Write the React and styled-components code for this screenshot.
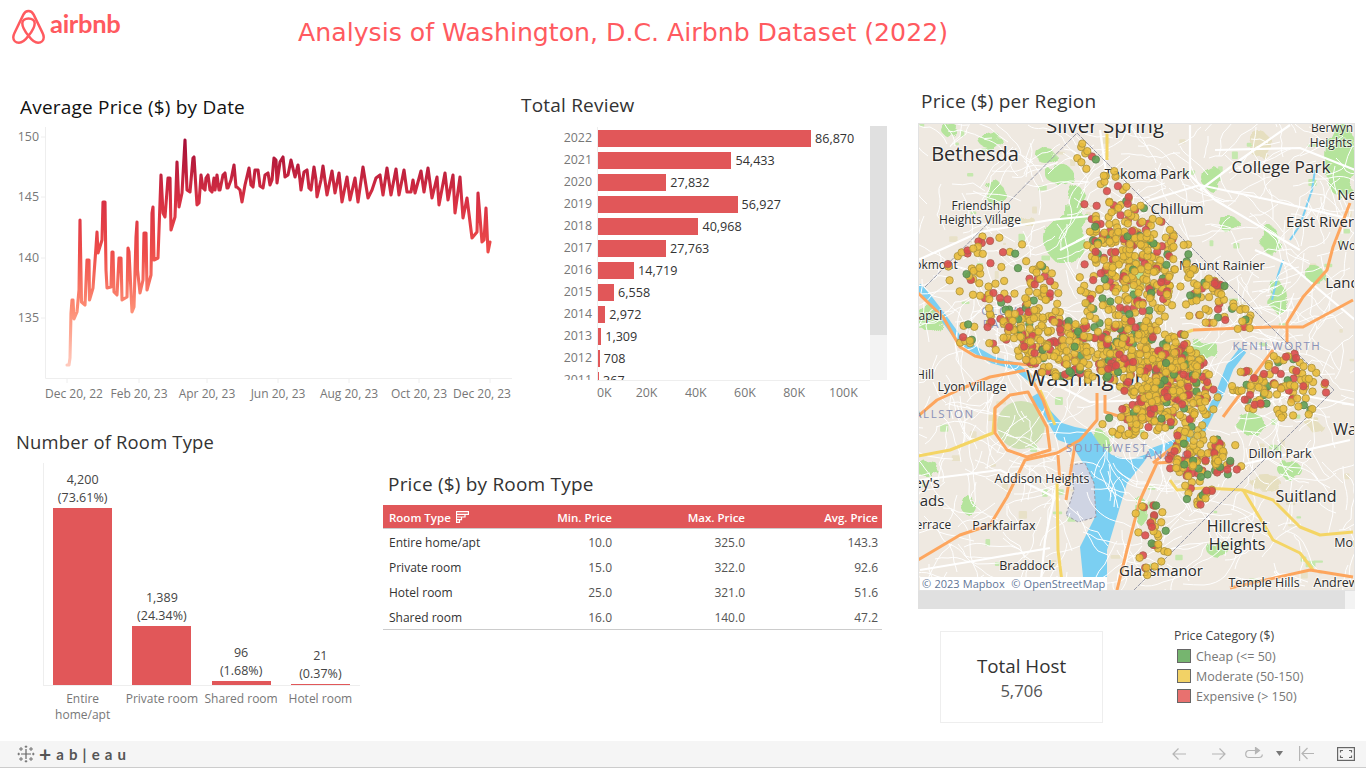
import React from 'react';
import styled, { createGlobalStyle } from 'styled-components';

const GlobalStyle = createGlobalStyle`
  html, body {
    margin: 0;
    padding: 0;
    background: #fff;
  }
  body {
    font-family: 'Open Sans', 'Noto Sans', sans-serif;
    overflow: hidden;
  }
`;

const Page = styled.div`
  width: 1366px;
  height: 768px;
  display: flex;
  flex-direction: column;
  overflow: hidden;
`;

const Header = styled.header`
  height: 88px;
  display: flex;
  flex-shrink: 0;
`;

const Logo = styled.div`
  display: flex;
  align-items: flex-start;
  gap: 5px;
  width: 298px;
  padding: 9px 0 0 12px;
  box-sizing: border-box;
`;

const LogoText = styled.span`
  font-family: Lato, sans-serif;
  font-weight: 700;
  font-size: 25.5px;
  line-height: 30px;
  letter-spacing: -0.3px;
  color: #ff5a5f;
  margin-top: -1px;
`;

const MainTitle = styled.h1`
  margin: 16px 0 0;
  font-family: 'DejaVu Sans', sans-serif;
  font-weight: 400;
  font-size: 25.2px;
  line-height: 34px;
  color: #ff5a5f;
  white-space: nowrap;
`;

const Body = styled.main`
  flex: 1;
  display: grid;
  grid-template-columns: 905px 461px;
  min-height: 0;
`;

const LeftColumn = styled.div`
  display: flex;
  flex-direction: column;
`;

const TopRow = styled.div`
  height: 342px;
  display: flex;
`;

const BottomRow = styled.div`
  flex: 1;
  display: flex;
`;

const PanelTitle = styled.h2`
  margin: 0;
  font-weight: 400;
  font-size: ${(p) => p.$size || 19}px;
  line-height: 24px;
  color: ${(p) => p.$color || '#333'};
  white-space: nowrap;
  letter-spacing: 0.2px;
`;

const LinePanel = styled.section`
  width: 510px;
  padding: 7px 0 0 20px;
  box-sizing: border-box;
`;

const LineSvg = styled.svg`
  display: block;
  margin: 6px 0 0 -20px;
  overflow: visible;
`;

const ReviewPanel = styled.section`
  width: 395px;
  padding: 5px 0 0 11px;
  box-sizing: border-box;
`;

const ReviewBody = styled.div`
  display: flex;
  margin-top: 9px;
`;

const ScrollArea = styled.div`
  width: 349px;
  height: 254px;
  overflow: hidden;
  padding-top: 1px;
  box-sizing: border-box;
`;

const YearRow = styled.div`
  display: flex;
  height: 22px;
  align-items: stretch;
`;

const YearLabel = styled.span`
  width: 71px;
  margin-right: 5px;
  text-align: right;
  font-size: 12.4px;
  line-height: 22px;
  color: #777;
`;

const BarCell = styled.div`
  flex: 1;
  display: flex;
  align-items: center;
  gap: 4px;
  border-left: 1px solid #eee;
`;

const HBar = styled.div`
  height: 17px;
  background: #e15759;
`;

const BarValue = styled.span`
  font-size: 12.6px;
  color: #333;
`;

const VScroll = styled.div`
  width: 17px;
  height: 254px;
  background: #f3f3f3;
`;

const VThumb = styled.div`
  height: 209px;
  background: #e0e0e0;
`;

const ReviewAxis = styled.div`
  display: grid;
  grid-template-columns: 25px repeat(5, 49.2px);
  width: 273px;
  margin-left: 76px;
  border-top: 1px solid #eee;
  padding-top: 4px;
  font-size: 12.4px;
  line-height: 16px;
  color: #777;
`;

const AxisTick = styled.span`
  text-align: center;
  white-space: nowrap;
  &:first-child {
    text-align: left;
  }
`;

const RoomPanel = styled.section`
  width: 383px;
  padding-left: 16px;
  box-sizing: border-box;
`;

const ColumnChart = styled.div`
  display: flex;
  align-items: flex-end;
  width: 317px;
  height: 222px;
  margin: 9px 0 0 27px;
  box-shadow: inset 1px 0 0 #eee;
  border-bottom: 1px solid #eee;
`;

const Column = styled.div`
  flex: 1;
  display: flex;
  flex-direction: column;
  align-items: center;
`;

const ColumnValue = styled.div`
  font-size: 12.5px;
  line-height: 18px;
  color: #444;
  text-align: center;
  margin-bottom: 1px;
`;

const VBar = styled.div`
  width: 59px;
  background: #e15759;
`;

const ColumnLabels = styled.div`
  display: flex;
  width: 317px;
  margin-left: 27px;
  padding-top: 5px;
`;

const ColumnLabel = styled.div`
  flex: 1;
  font-size: 12px;
  line-height: 16px;
  color: #777;
  text-align: center;
  white-space: pre-line;
`;

const TablePanel = styled.section`
  width: 499px;
  padding-top: 42px;
`;

const TableTitle = styled(PanelTitle)`
  padding-left: 5px;
  margin-bottom: 9px;
`;

const TableRow = styled.div`
  display: grid;
  grid-template-columns: 120px 103px 133px 133px;
  align-items: center;
  padding: 1px 4px 0 6px;
  height: 24px;
  font-size: 12px;
  color: #555;
  text-align: right;
`;

const HeadRow = styled(TableRow)`
  background: #e15759;
  color: #fff;
  font-weight: 600;
  font-size: 11.5px;
  height: 22px;
  border-bottom: 1px solid #ccc;
`;

const NameCell = styled.span`
  display: flex;
  align-items: center;
  gap: 5px;
  text-align: left;
  color: ${(p) => (p.$head ? '#fff' : '#333')};
`;

const TableEnd = styled.div`
  border-top: 1px solid #ccc;
`;

const RightColumn = styled.div`
  padding: 1px 0 0 13px;
  display: flex;
  flex-direction: column;
`;

const RegionTitle = styled(PanelTitle)`
  padding-left: 3px;
  margin-bottom: 10px;
`;

const MapFrame = styled.div`
  position: relative;
  width: 437px;
  height: 468px;
  overflow: hidden;
  outline: 1px solid #e2e2e2;
  outline-offset: -1px;
`;

const MapSvg = styled.svg`
  display: block;
`;

const Attribution = styled.div`
  position: absolute;
  left: 2px;
  bottom: 1px;
  padding: 0 2px;
  background: #fff;
  font-size: 11px;
  line-height: 13px;
  color: #5f7596;
  word-spacing: 0.4px;
  white-space: pre;
`;

const HScroll = styled.div`
  width: 437px;
  height: 18px;
  background: #f3f3f3;
`;

const HThumb = styled.div`
  width: 427px;
  height: 18px;
  background: #e0e0e0;
`;

const InfoRow = styled.div`
  display: flex;
  align-items: flex-start;
  padding-top: 18px;
`;

const HostCard = styled.div`
  width: 163px;
  height: 92px;
  margin: 4px 0 0 22px;
  box-sizing: border-box;
  border: 1px solid #eee;
  display: flex;
  flex-direction: column;
  align-items: center;
  padding-top: 21px;
`;

const HostLabel = styled.div`
  font-size: 18.8px;
  line-height: 26px;
  color: #333;
`;

const HostValue = styled.div`
  font-size: 16.6px;
  line-height: 24px;
  color: #555;
`;

const Legend = styled.div`
  margin: 1px 0 0 71px;
`;

const LegendTitle = styled.div`
  font-size: 12.3px;
  line-height: 16px;
  color: #444;
  margin-bottom: 2px;
`;

const LegendItem = styled.div`
  display: flex;
  align-items: center;
  gap: 5px;
  height: 20px;
  padding-left: 3px;
  font-size: 12.5px;
  color: #777;
`;

const Swatch = styled.span`
  width: 14px;
  height: 14px;
  box-sizing: border-box;
  border: 1px solid #666;
  background: ${(p) => p.$color};
`;

const Footer = styled.footer`
  height: 27px;
  flex-shrink: 0;
  box-sizing: border-box;
  display: flex;
  align-items: center;
  background: #f5f5f5;
  border-bottom: 1px solid #ccc;
  padding: 0 11px 1px 17px;
`;

const TableauMark = styled.div`
  display: flex;
  align-items: center;
  gap: 4px;
  flex: 1;
`;

const TableauPlus = styled.span`
  font-family: Lato, sans-serif;
  font-weight: 700;
  font-size: 21px;
  line-height: 20px;
  color: #555;
`;

const TableauText = styled.span`
  font-family: Lato, sans-serif;
  font-weight: 700;
  font-size: 15px;
  letter-spacing: 1.25px;
  word-spacing: -1px;
  margin-left: 1px;
  color: #555;
  white-space: pre;
`;

const ToolIcon = styled.svg`
  display: block;
  margin-left: ${(p) => p.$ml || 0}px;
  fill: none;
  stroke: ${(p) => p.$stroke || '#b5b5b5'};
  stroke-width: 1.2;
`;

// -------- data --------

const linePoints = [
  [67,365],[69,365],[70,358],[71,313],[72,300],[73,300],[74,319],[77,312],[79,290],[80,220],[81.5,302],[85,305],[87,260],[89,260],[89.5,300],[93,288],[96,247],[97,232],[98,253],[102,240],[103,202],[105,202],[106,270],[107,288],[111,287],[112,252],[113,252],[114,292],[117,295],[119,258],[121,258],[122,300],[127,297],[128,248],[129,252],[132,312],[134,307],[136,237],[137,222],[137.5,270],[140,293],[143,280],[144,233],[146,233],[147,290],[151,275],[152,213],[153,207],[154,260],[158,258],[161,175],[163,213],[165,217],[168,178],[170,178],[171,230],[175,217],[177,162],[179,207],[182,193],[185,140],[187,190],[190,192],[193,158],[194,157],[197,205],[199,203],[201,175],[203,188],[205,190],[206,178],[208,175],[210,190],[212,192],[214,178],[215,190],[217,175],[219,190],[220,190],[223,175],[225,173],[227,188],[228,188],[231,180],[234,165],[236,187],[237,187],[240,190],[242,202],[245,185],[249,168],[251,185],[253,187],[255,170],[258,170],[260,186],[263,188],[265,175],[268,173],[270,185],[272,180],[274,158],[276,160],[277,183],[280,162],[283,157],[285,177],[288,175],[291,160],[295,177],[298,165],[300,180],[301,190],[304,172],[307,170],[309,188],[311,190],[314,167],[316,180],[317,197],[321,180],[323,166],[327,195],[332,171],[335,193],[339,173],[342,202],[347,177],[350,200],[355,178],[358,202],[363,167],[368,198],[372,190],[376,178],[380,175],[383,195],[387,168],[391,195],[396,169],[399,195],[404,170],[407,192],[411,192],[413,180],[415,193],[421,171],[424,192],[428,168],[432,198],[437,177],[439,205],[445,173],[448,200],[453,175],[455,213],[460,177],[463,218],[467,198],[472,238],[477,232],[478,193],[482,242],[484,240],[486,208],[488,252],[490,242],
].map((p) => p.join(',')).join(' ');

const yTicks = [['150', 137], ['145', 197], ['140', 258], ['135', 318]];
const xTicks = [
  ['Dec 20, 22', 74, 67], ['Feb 20, 23', 139, 139], ['Apr 20, 23', 207, 207], ['Jun 20, 23', 278, 278],
  ['Aug 20, 23', 349, 349], ['Oct 20, 23', 419, 419], ['Dec 20, 23', 482, 490],
];

const reviews = [
  ['2022', 86870], ['2021', 54433], ['2020', 27832], ['2019', 56927], ['2018', 40968], ['2017', 27763],
  ['2016', 14719], ['2015', 6558], ['2014', 2972], ['2013', 1309], ['2012', 708], ['2011', 367],
];

const roomTypes = [
  { count: '4,200', pct: '(73.61%)', h: 177, label: 'Entire\nhome/apt' },
  { count: '1,389', pct: '(24.34%)', h: 59, label: 'Private room' },
  { count: '96', pct: '(1.68%)', h: 4, label: 'Shared room' },
  { count: '21', pct: '(0.37%)', h: 1, label: 'Hotel room' },
];

const priceRows = [
  ['Entire home/apt', '10.0', '325.0', '143.3'],
  ['Private room', '15.0', '322.0', '92.6'],
  ['Hotel room', '25.0', '321.0', '51.6'],
  ['Shared room', '16.0', '140.0', '47.2'],
];

// seeded random so that the map is the same on each load
const makeRandom = (seed) => {
  let s = seed;
  return () => {
    s = (s * 16807) % 2147483647;
    return s / 2147483647;
  };
};

const clusters = [
  [1085, 350, 68, 30, 210], [1150, 362, 50, 38, 210], [1180, 392, 38, 44, 190], [1150, 415, 24, 22, 55],
  [1125, 288, 46, 60, 210], [1110, 205, 26, 36, 40], [1135, 240, 50, 40, 100], [1190, 270, 44, 40, 70],
  [1232, 305, 48, 26, 58], [985, 262, 42, 40, 50], [1012, 325, 28, 32, 70], [1042, 300, 22, 36, 50],
  [1085, 155, 14, 14, 10], [1122, 420, 22, 20, 24], [1292, 385, 38, 34, 85], [1250, 390, 22, 22, 26],
  [1195, 455, 30, 24, 85], [1226, 455, 20, 20, 22], [1197, 497, 18, 16, 20], [1150, 525, 18, 22, 22],
  [1155, 560, 16, 18, 14], [970, 335, 14, 12, 9],
];

const makeDots = () => {
  const rand = makeRandom(91733);
  const dots = [];
  clusters.forEach(([cx, cy, rx, ry, n]) => {
    for (let i = 0; i < n; i++) {
      const a = rand() * Math.PI * 2;
      const r = Math.pow(rand(), 0.6);
      const x = cx + Math.cos(a) * r * rx;
      const y = cy + Math.sin(a) * r * ry;
      if (x + y < 1210 || y - x < -944 || x + y > 1724) continue;
      const t = rand();
      dots.push({ x, y, kind: t < 0.67 ? 'y' : t < 0.9 ? 'r' : 'g', order: rand() });
    }
  });
  return dots.sort((a, b) => a.order - b.order);
};

const makeStreets = () => {
  const rand = makeRandom(4421);
  const streets = [];
  for (let i = 0; i < 540; i++) {
    let x = 918 + rand() * 437;
    let y = 123 + rand() * 468;
    let angle = rand() * Math.PI * 2;
    let d = `M${x.toFixed(0)} ${y.toFixed(0)}`;
    const steps = 2 + Math.floor(rand() * 3);
    for (let j = 0; j < steps; j++) {
      const len = 8 + rand() * 16;
      const midAngle = angle + (rand() - 0.5) * 0.9;
      const cx = x + Math.cos(midAngle) * len * 0.5;
      const cy = y + Math.sin(midAngle) * len * 0.5;
      x += Math.cos(angle) * len;
      y += Math.sin(angle) * len;
      angle += (rand() - 0.5) * 1.3;
      d += `Q${cx.toFixed(0)} ${cy.toFixed(0)} ${x.toFixed(0)} ${y.toFixed(0)}`;
    }
    streets.push(d);
  }
  return streets;
};

const makeBlocks = () => {
  const rand = makeRandom(1207);
  const blocks = [];
  for (let i = 0; i < 110; i++) {
    blocks.push({
      x: 918 + rand() * 437,
      y: 123 + rand() * 468,
      w: 3 + rand() * 7,
      h: 2 + rand() * 6,
      fill: rand() < 0.55 ? '#c5e8ae' : '#e8e1c8',
    });
  }
  return blocks;
};

const dots = makeDots();
const streets = makeStreets();
const blocks = makeBlocks();

const dotColors = {
  y: ['#e9bd3c', '#a8913c'],
  r: ['#dc4d4d', '#a95f50'],
  g: ['#5f9e53', '#5b8450'],
};

const parks = [
  [1075, 210, 10, 26], [1045, 155, 9, 8], [995, 193, 9, 12], [990, 140, 10, 10], [1065, 240, 20, 24],
  [1341, 160, 16, 38], [1278, 297, 9, 15], [1135, 277, 9, 20], [1250, 423, 14, 11], [1098, 452, 14, 22],
  [927, 468, 11, 9], [1218, 548, 12, 9], [1212, 178, 10, 12], [1060, 175, 14, 10], [1230, 225, 10, 8],
  [1205, 350, 14, 10], [968, 505, 7, 9], [1290, 470, 12, 8], [1270, 240, 8, 14], [930, 318, 11, 14],
  [1140, 510, 6, 14], [1098, 560, 6, 14], [1315, 275, 10, 8], [950, 130, 9, 6],
];

const tanAreas = [
  [1260, 145, 11, 13], [1265, 482, 15, 8], [1315, 425, 8, 6], [1026, 220, 8, 5],
];

const orangeRoads = [
  'M995 408 L1010 395 L1028 392 L1047 427 L1050 450 L1027 457 L1007 450 L995 433 Z',
  'M918 560 L960 535 L990 525 L1007 497 L1025 460 L1057 453 L1080 440 L1097 420 L1097 393',
  'M917 417 L937 400 L963 388 L990 377 L1027 370 L1043 400 L1050 420',
  'M1350 203 L1333 247 L1327 270 L1303 297 L1287 323 L1287 343',
  'M1193 330 L1243 328 L1273 327 L1303 327 L1353 300',
  'M918 293 L943 317 L960 347 L975 356 L1000 362 L1030 365',
  'M1117 590 L1127 550 L1140 500 L1157 463 L1173 462',
  'M1230 588 L1310 570 L1353 577',
  'M1177 433 L1178 443 L1153 463',
  'M1223 417 L1273 350',
  'M1058 455 L1060 483',
  'M1075 445 L1066 500',
  'M1105 395 L1105 412 L1125 418 L1140 410',
];

const yellowRoads = [
  'M918 456 L950 450 L993 433 L995 408',
  'M1057 483 L1058 550 L1063 590',
  'M1170 480 L1177 490 L1203 488 L1243 490 L1273 500 L1300 527 L1320 535 L1353 532',
  'M1243 490 L1263 523 L1273 540 L1300 553 L1313 570',
  'M1107 133 L1107 160',
  'M1167 340 L1193 330',
  'M1040 390 L1055 425',
];

const whiteRoads = [
  'M1060 250 L1110 225 L1150 200 L1200 185 L1270 200 L1355 220',
  'M918 260 L980 232 L1050 220 L1100 215',
  'M1100 130 L1110 200 L1118 280',
  'M1190 125 L1190 175 L1215 200 L1300 250',
  'M1290 125 L1240 160 L1200 190',
  'M1215 150 L1300 148 L1355 170',
  'M1355 320 L1290 265 L1255 250',
  'M1028 370 L1090 402 L1150 400',
  'M1230 395 L1300 395 L1355 405',
  'M920 480 L1000 470 L1060 500',
  'M1060 470 L1045 540 L1040 590',
  'M1240 465 L1350 440',
  'M920 570 L980 560 L1050 548',
];

const mapLabels = [
  ['Silver Spring', 1105, 133, 20.5],
  ['Bethesda', 975, 161, 20],
  ['College Park', 1281, 173, 17.2],
  ['Berwyn', 1332, 132, 12],
  ['Heights', 1331, 147, 12],
  ['Takoma Park', 1147, 179, 14],
  ['Chillum', 1177, 214, 15],
  ['Friendship', 981, 210, 12],
  ['Heights Village', 980, 224, 12],
  ['East River', 1320, 227, 15],
  ['New', 1353, 200, 15],
  ['Wo', 1347, 250, 12],
  ['Mount Rainier', 1222, 270, 13],
  ['Lando', 1347, 288, 15],
  ['Brookmont', 926, 269, 12],
  ['Chapel', 923, 320, 12],
  ['Hill', 925, 379, 12],
  ['Lyon Village', 972, 391, 12.5],
  ['Washington', 1087, 386, 22],
  ['Addison Heights', 1042, 483, 12.5],
  ['Bailey\'s', 914, 488, 15],
  ['Crossroads', 905, 506, 15],
  ['Terrace', 930, 529, 12],
  ['Parkfairfax', 1004, 530, 12.5],
  ['Braddock', 1027, 570, 12.5],
  ['Glassmanor', 1161, 576, 15],
  ['Temple Hills', 1264, 587, 12.5],
  ['Andrews', 1339, 587, 12.5],
  ['Hillcrest', 1237, 532, 16],
  ['Heights', 1237, 550, 16],
  ['Suitland', 1306, 502, 16],
  ['Wa', 1345, 435, 16],
  ['Dillon Park', 1280, 458, 12.5],
  ['Morn', 1350, 547, 12.5],
];

const districtLabels = [
  ['GLOVER', 1008, 315],
  ['PARK', 1000, 328],
  ['KENILWORTH', 1277, 350],
  ['BALLSTON', 940, 418],
  ['SOUTHWEST', 1107, 452],
  ['ANACOSTIA', 1183, 459],
];

// -------- drawings --------

const AirbnbMark = () => (
  <svg width="33" height="35" viewBox="0 0 32 34" fill="none" stroke="#ff5a5f" strokeWidth="2.4">
    <path d="M16 2C13.5 2 12 3.5 11 5.5L2.5 23C1.5 25 1.2 26.2 1.2 27.5C1.2 30.5 3.5 32.8 6.7 32.8C9.5 32.8 12.5 30.8 16 26C19.5 30.8 22.5 32.8 25.3 32.8C28.5 32.8 30.8 30.5 30.8 27.5C30.8 26.2 30.5 25 29.5 23L21 5.5C20 3.5 18.5 2 16 2Z" />
    <path d="M16 26C12 21 10 17 10 14C10 11 12.5 9.2 16 9.2C19.5 9.2 22 11 22 14C22 17 20 21 16 26Z" />
  </svg>
);

const TableauIcon = () => (
  <svg width="18" height="18" viewBox="0 0 18 18" stroke="#666" fill="none">
    <path d="M9 4V14M4 9H14" strokeWidth="1.2" />
    <path d="M9 0.5V3M7.7 1.7H10.3M9 15V17.5M7.7 16.3H10.3M0.5 9H3M1.7 7.7V10.3M15 9H17.5M16.3 7.7V10.3" strokeWidth="0.9" />
    <path d="M4 2V6M2 4H6M14 2V6M12 4H16M4 12V16M2 14H6M14 12V16M12 14H16" strokeWidth="0.9" />
  </svg>
);

const SortIcon = () => (
  <svg width="13" height="13" viewBox="0 0 13 13" stroke="#fff" strokeWidth="1.2" fill="none">
    <path d="M0.5 0.7H12.5V3.3H0.5ZM0.5 3.3V6H9V3.3M0.5 6V8.7H5.5V6M0.5 8.7V11.4H3.5V8.7" />
  </svg>
);

const LineChart = () => (
  <LineSvg width="515" height="285" viewBox="0 125 515 285">
    <defs>
      <linearGradient id="priceLine" gradientUnits="userSpaceOnUse" x1="0" y1="365" x2="0" y2="140">
        <stop offset="0" stopColor="#ffc9bc" />
        <stop offset="0.25" stopColor="#fd8d74" />
        <stop offset="0.5" stopColor="#ee4d4a" />
        <stop offset="0.72" stopColor="#d93244" />
        <stop offset="1" stopColor="#a60f37" />
      </linearGradient>
    </defs>
    <path d="M45.5 127V378.5H512" stroke="#eee" fill="none" />
    {yTicks.map(([label, y]) => (
      <g key={label}>
        <path d={`M41 ${y}H45`} stroke="#eee" />
        <text x="39" y={y + 4} textAnchor="end" fontSize="12.4" fill="#777">{label}</text>
      </g>
    ))}
    {xTicks.map(([label, x, tick]) => (
      <g key={label}>
        <path d={`M${tick} 378V383`} stroke="#eee" />
        <text x={x} y="398" textAnchor="middle" fontSize="12" fill="#777">{label}</text>
      </g>
    ))}
    <polyline points={linePoints} fill="none" stroke="url(#priceLine)" strokeWidth="3.1" strokeLinejoin="round" strokeLinecap="round" />
  </LineSvg>
);

const RegionMap = () => (
  <MapSvg width="437" height="468" viewBox="918 123 437 468">
    <defs>
      <filter id="organicEdge" x="-5%" y="-5%" width="110%" height="110%">
        <feTurbulence type="fractalNoise" baseFrequency="0.08" numOctaves="2" seed="7" />
        <feDisplacementMap in="SourceGraphic" scale="14" />
      </filter>
    </defs>
    <rect x="918" y="123" width="437" height="468" fill="#efe9e1" />
    {blocks.map((b, i) => (
      <rect key={i} x={b.x} y={b.y} width={b.w} height={b.h} rx="1" fill={b.fill} />
    ))}
    <g filter="url(#organicEdge)">
      {parks.map(([cx, cy, rx, ry], i) => (
        <ellipse key={i} cx={cx} cy={cy} rx={rx} ry={ry} fill="#b5e49c" />
      ))}
      {tanAreas.map(([cx, cy, rx, ry], i) => (
        <ellipse key={i} cx={cx} cy={cy} rx={rx} ry={ry} fill="#e6dfc0" />
      ))}
    </g>
    <ellipse cx="1021" cy="425" rx="24" ry="24" fill="#cfe0b4" />
    <path d="M1040 392L1050 410L1062 423L1075 427L1090 430L1100 445L1112 455L1130 460L1150 453L1143 463L1127 483L1113 530L1107 550L1107 590L1086 590L1083 577L1080 547L1095 517L1093 483L1083 463L1072 445L1058 440L1042 412L1030 398Z" fill="#7bcff2" />
    <polyline points="918,286 930,300 943,317 958,338 972,348 993,360 1015,366 1035,382" fill="none" stroke="#7bcff2" strokeWidth="7" />
    <polyline points="1150,453 1177,443 1200,433 1220,393 1230,367 1243,350" fill="none" stroke="#7bcff2" strokeWidth="8" />
    <polyline points="1315,170 1312,190 1300,225 1290,240" fill="none" stroke="#7bcff2" strokeWidth="2" />
    <polyline points="1272,300 1278,275 1283,260" fill="none" stroke="#7bcff2" strokeWidth="2" />
    <path d="M1070 465L1085 463L1094 483L1096 517L1078 522L1066 515L1074 490Z" fill="#cfd4e3" stroke="#9a9aa5" strokeDasharray="3 2" />
    {streets.map((d, i) => (
      <path key={i} d={d} fill="none" stroke="#fff" strokeWidth="1" />
    ))}
    {whiteRoads.map((d, i) => (
      <path key={i} d={d} fill="none" stroke="#fff" strokeWidth="2.2" strokeLinejoin="round" />
    ))}
    {yellowRoads.map((d, i) => (
      <path key={i} d={d} fill="none" stroke="#f4d565" strokeWidth="3" strokeLinejoin="round" />
    ))}
    {orangeRoads.map((d, i) => (
      <path key={i} d={d} fill="none" stroke="#fda65e" strokeWidth="3" strokeLinejoin="round" />
    ))}
    <path d="M925 287L1077 133L1334 390L1133 591" fill="none" stroke="#9a9cab" strokeWidth="1" strokeDasharray="5 1" />
    {mapLabels.map(([text, x, y, size], i) => (
      <text key={i} x={x} y={y} fontSize={size} textAnchor="middle" fill="#2b2b2b" stroke="#fff" strokeOpacity="0.6" strokeWidth="2" paintOrder="stroke">{text}</text>
    ))}
    {districtLabels.map(([text, x, y]) => (
      <text key={text} x={x} y={y} fontSize="11.5" letterSpacing="1.6" textAnchor="middle" fill="#8a92b8">{text}</text>
    ))}
    {dots.map((dot, i) => (
      <circle key={i} cx={dot.x} cy={dot.y} r="3.7" fill={dotColors[dot.kind][0]} fillOpacity="0.9" stroke={dotColors[dot.kind][1]} strokeWidth="0.8" />
    ))}
  </MapSvg>
);

export default function App() {
  return (
    <Page>
      <GlobalStyle />
      <Header>
        <Logo>
          <AirbnbMark />
          <LogoText>airbnb</LogoText>
        </Logo>
        <MainTitle>Analysis of Washington, D.C. Airbnb Dataset (2022)</MainTitle>
      </Header>

      <Body>
        <LeftColumn>
          <TopRow>
            <LinePanel>
              <PanelTitle $color="#111">Average Price ($) by Date</PanelTitle>
              <LineChart />
            </LinePanel>
            <ReviewPanel>
              <PanelTitle>Total Review</PanelTitle>
              <ReviewBody>
                <ScrollArea>
                  {reviews.map(([year, value]) => (
                    <YearRow key={year}>
                      <YearLabel>{year}</YearLabel>
                      <BarCell>
                        <HBar style={{ width: Math.max(1, value * 0.002452) }} />
                        <BarValue>{value.toLocaleString('en-US')}</BarValue>
                      </BarCell>
                    </YearRow>
                  ))}
                </ScrollArea>
                <VScroll>
                  <VThumb />
                </VScroll>
              </ReviewBody>
              <ReviewAxis>
                {['0K', '20K', '40K', '60K', '80K', '100K'].map((t) => (
                  <AxisTick key={t}>{t}</AxisTick>
                ))}
              </ReviewAxis>
            </ReviewPanel>
          </TopRow>

          <BottomRow>
            <RoomPanel>
              <PanelTitle $size={18.4}>Number of Room Type</PanelTitle>
              <ColumnChart>
                {roomTypes.map((r) => (
                  <Column key={r.label}>
                    <ColumnValue>{r.count}<br />{r.pct}</ColumnValue>
                    <VBar style={{ height: r.h }} />
                  </Column>
                ))}
              </ColumnChart>
              <ColumnLabels>
                {roomTypes.map((r) => (
                  <ColumnLabel key={r.label}>{r.label}</ColumnLabel>
                ))}
              </ColumnLabels>
            </RoomPanel>
            <TablePanel>
              <TableTitle>Price ($) by Room Type</TableTitle>
              <HeadRow>
                <NameCell $head>Room Type <SortIcon /></NameCell>
                <span>Min. Price</span>
                <span>Max. Price</span>
                <span>Avg. Price</span>
              </HeadRow>
              {priceRows.map(([name, min, max, avg]) => (
                <TableRow key={name}>
                  <NameCell>{name}</NameCell>
                  <span>{min}</span>
                  <span>{max}</span>
                  <span>{avg}</span>
                </TableRow>
              ))}
              <TableEnd />
            </TablePanel>
          </BottomRow>
        </LeftColumn>

        <RightColumn>
          <RegionTitle>Price ($) per Region</RegionTitle>
          <MapFrame>
            <RegionMap />
            <Attribution>© 2023 Mapbox  © OpenStreetMap</Attribution>
          </MapFrame>
          <HScroll>
            <HThumb />
          </HScroll>
          <InfoRow>
            <HostCard>
              <HostLabel>Total Host</HostLabel>
              <HostValue>5,706</HostValue>
            </HostCard>
            <Legend>
              <LegendTitle>Price Category ($)</LegendTitle>
              <LegendItem><Swatch $color="#76b56f" />Cheap (&lt;= 50)</LegendItem>
              <LegendItem><Swatch $color="#f2d266" />Moderate (50-150)</LegendItem>
              <LegendItem><Swatch $color="#e8716f" />Expensive (&gt; 150)</LegendItem>
            </Legend>
          </InfoRow>
        </RightColumn>
      </Body>

      <Footer>
        <TableauMark>
          <TableauIcon />
          <TableauPlus>+</TableauPlus>
          <TableauText>a b | e a u</TableauText>
        </TableauMark>
        <ToolIcon width="14" height="14" viewBox="0 0 14 14">
          <path d="M14 7H1M6.5 1.5L1 7L6.5 12.5" />
        </ToolIcon>
        <ToolIcon $ml={26} width="14" height="14" viewBox="0 0 14 14">
          <path d="M0 7H13M7.5 1.5L13 7L7.5 12.5" />
        </ToolIcon>
        <ToolIcon $ml={19} width="18" height="14" viewBox="0 0 18 14">
          <path d="M13 3.5H4C2 3.5 0.7 5 0.7 7C0.7 9 2 10.5 4 10.5H14C16 10.5 17.3 9 17.3 7.5" />
          <path d="M10.5 0.5L14.5 3.5L10.5 6.5Z" fill="#b5b5b5" />
        </ToolIcon>
        <ToolIcon $ml={13} width="7" height="5" viewBox="0 0 7 5" $stroke="none">
          <path d="M0 0H7L3.5 5Z" fill="#777" />
        </ToolIcon>
        <ToolIcon $ml={16} width="15" height="15" viewBox="0 0 15 15">
          <path d="M0.6 0V15M15 7.5H3M8.5 2L3 7.5L8.5 13" />
        </ToolIcon>
        <ToolIcon $ml={23} width="18" height="14" viewBox="0 0 18 14" $stroke="#666">
          <rect x="0.6" y="0.6" width="16.8" height="12.8" />
          <path d="M3.5 5.5V3.5H6M12 3.5H14.5V5.5M14.5 8.5V10.5H12M6 10.5H3.5V8.5" />
        </ToolIcon>
      </Footer>
    </Page>
  );
}
